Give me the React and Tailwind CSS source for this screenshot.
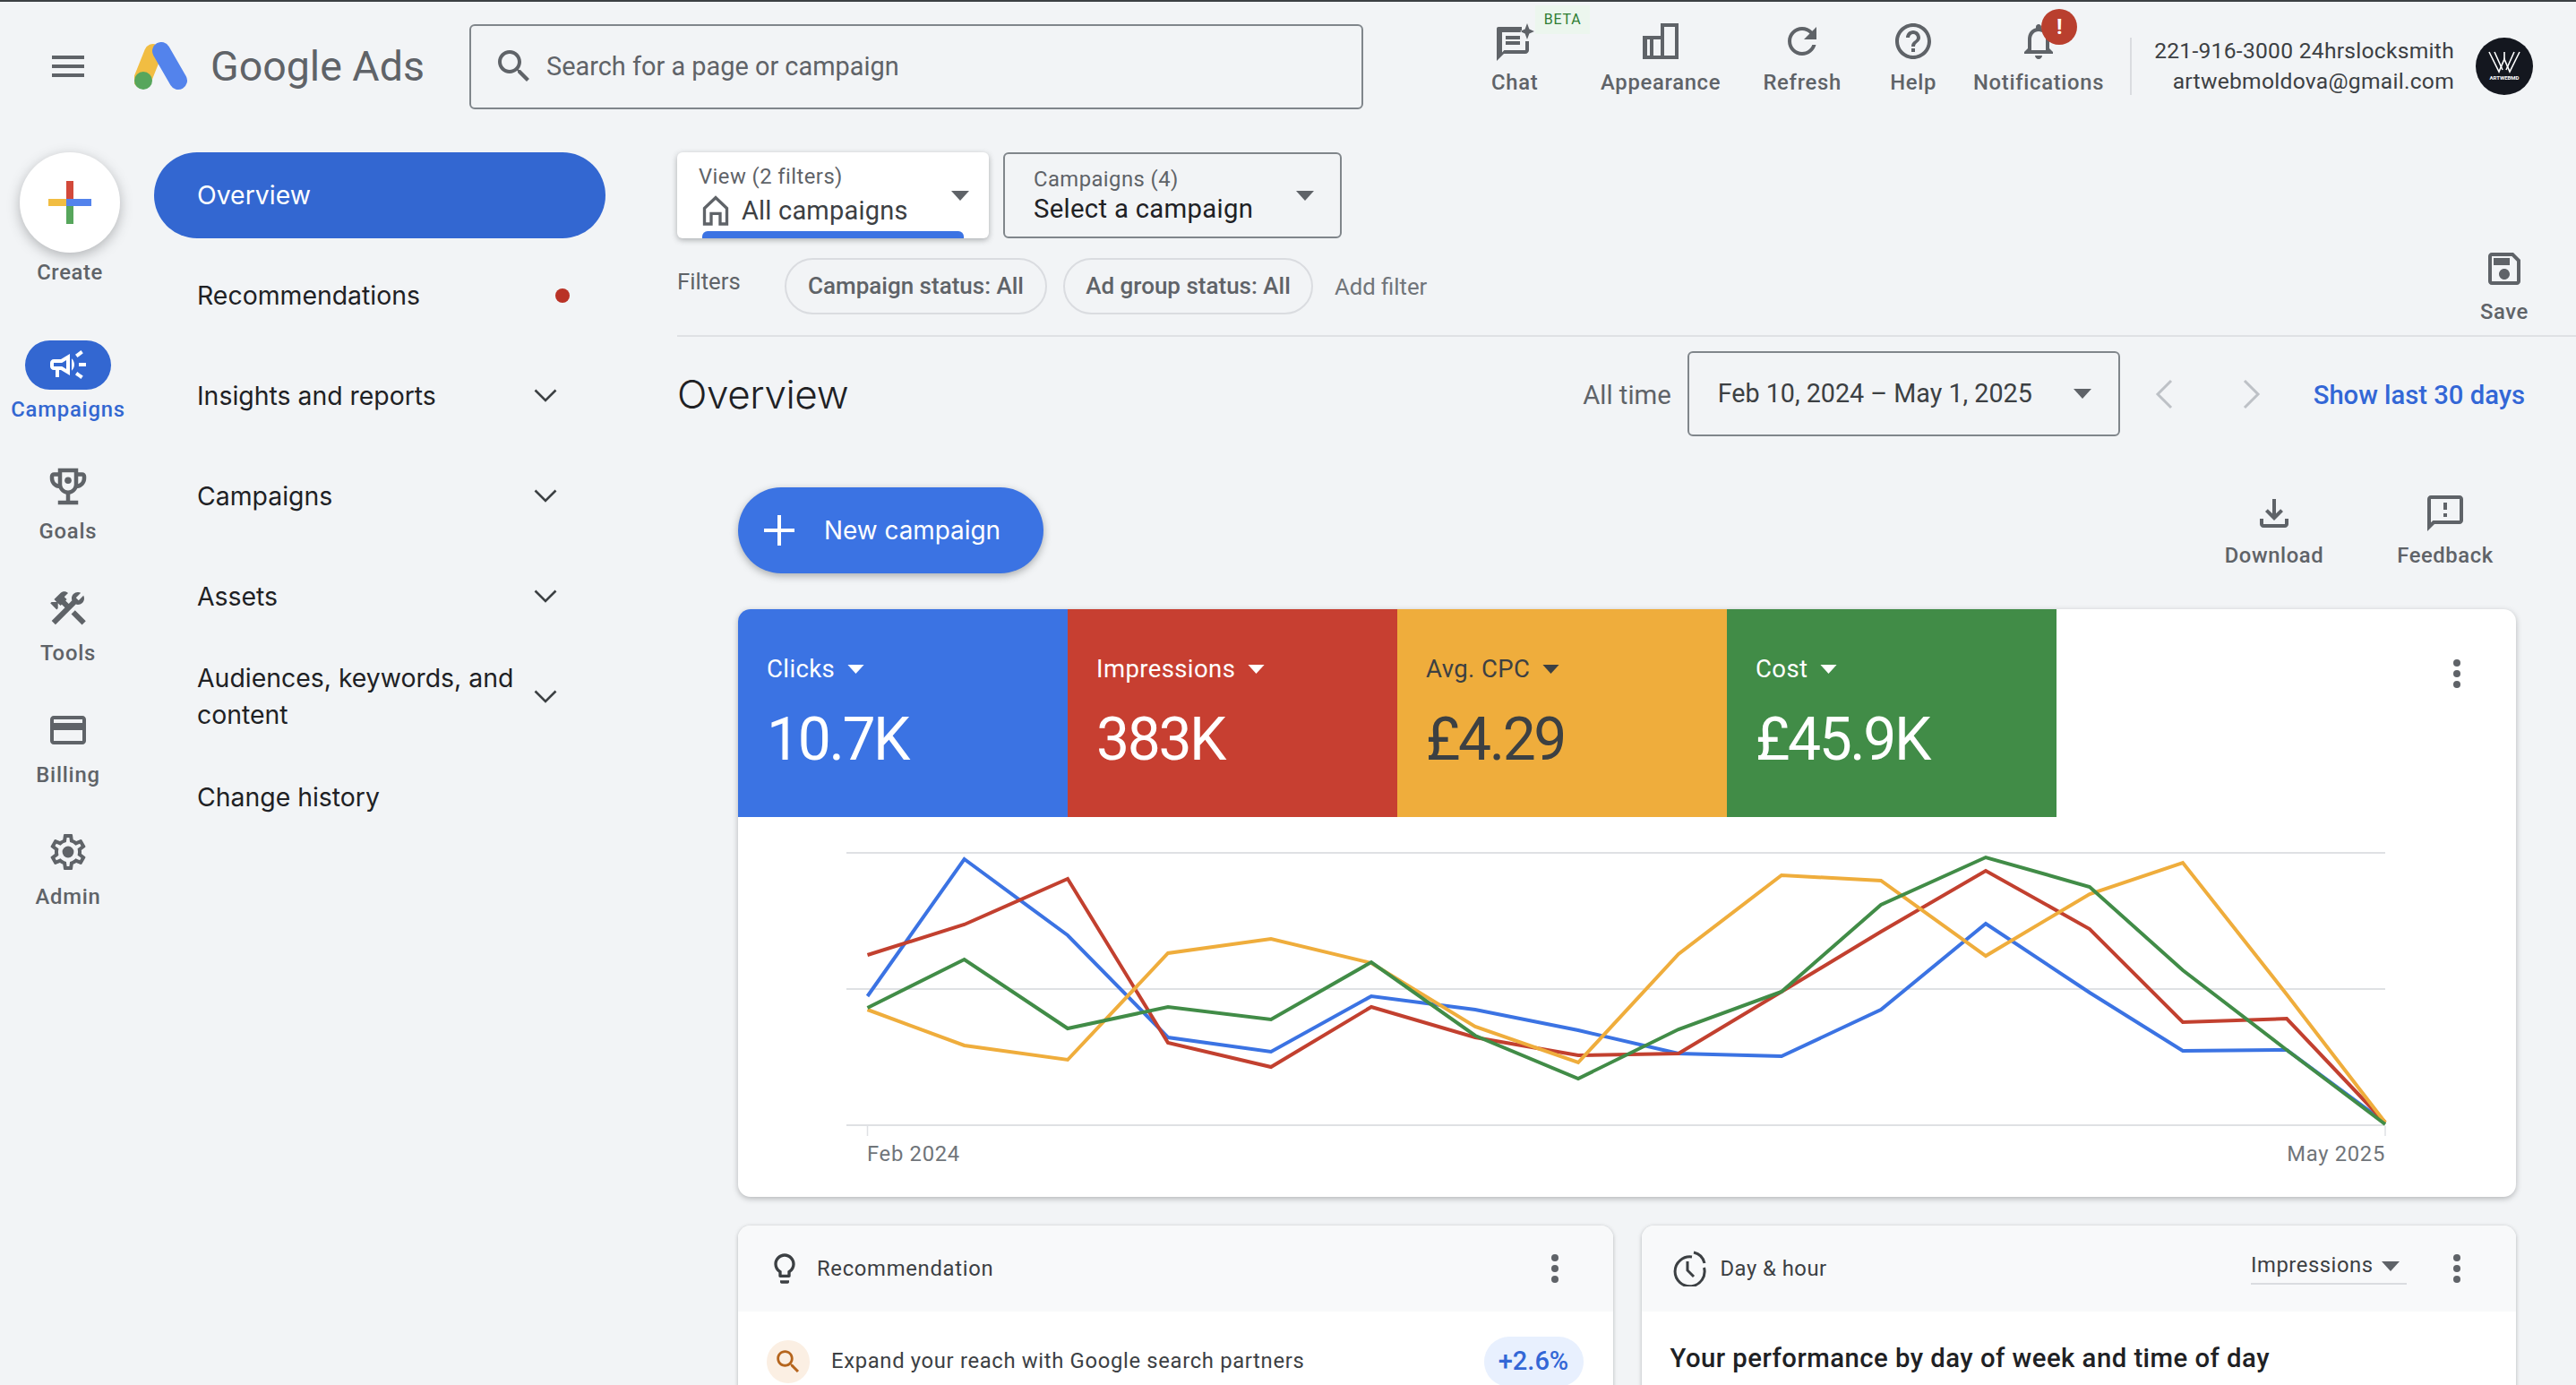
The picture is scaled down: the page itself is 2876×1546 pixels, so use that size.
import React from "react";

const G = "#5f6368";
const Ic = ({ d, size = 48, color = G, children, cls = "" }) => (
  <svg viewBox="0 0 24 24" width={size} height={size} fill={color} fillRule="evenodd" className={"shrink-0 " + cls}>
    {d && <path d={d} />}
    {children}
  </svg>
);
const Caret = ({ w = 20, h = 11, color = G }) => (
  <svg viewBox="0 0 20 11" width={w} height={h} fill={color} className="shrink-0"><path d="M0 0h20L10 11z" /></svg>
);
const Dots = ({ color = G }) => (
  <svg viewBox="0 0 8 32" width="8" height="32" fill={color} className="shrink-0">
    <circle cx="4" cy="4" r="4" /><circle cx="4" cy="16" r="4" /><circle cx="4" cy="28" r="4" />
  </svg>
);
const Chevron = () => (
  <svg viewBox="0 0 26 16" width="26" height="16" fill="none" stroke="#3c4043" strokeWidth="2.6" className="shrink-0"><path d="M1.5 1.5 13 13 24.5 1.5" /></svg>
);

const P = {
  menu: "M3 18h18v-2H3v2zm0-5h18v-2H3v2zm0-7v2h18V6H3z",
  search: "M15.5 14h-.79l-.28-.27C15.41 12.59 16 11.11 16 9.5 16 5.91 13.09 3 9.5 3S3 5.91 3 9.5 5.91 16 9.5 16c1.61 0 3.09-.59 4.23-1.57l.27.28v.79l5 4.99L20.49 19l-4.99-5zm-6 0C7.01 14 5 11.99 5 9.5S7.01 5 9.5 5 14 7.01 14 9.5 11.99 14 9.5 14z",
  refresh: "M17.65 6.35C16.2 4.9 14.21 4 12 4c-4.42 0-7.99 3.58-7.99 8s3.57 8 7.99 8c3.73 0 6.84-2.55 7.73-6h-2.08c-.82 2.33-3.04 4-5.65 4-3.31 0-6-2.69-6-6s2.69-6 6-6c1.66 0 3.14.69 4.22 1.78L13 11h7V4l-2.35 2.35z",
  help: "M11 18h2v-2h-2v2zm1-16C6.48 2 2 6.48 2 12s4.48 10 10 10 10-4.48 10-10S17.52 2 12 2zm0 18c-4.41 0-8-3.59-8-8s3.59-8 8-8 8 3.59 8 8-3.59 8-8 8zm0-14c-2.21 0-4 1.79-4 4h2c0-1.1.9-2 2-2s2 .9 2 2c0 2-3 1.75-3 5h2c0-2.25 3-2.5 3-5 0-2.21-1.79-4-4-4z",
  bell: "M12 22c1.1 0 2-.9 2-2h-4c0 1.1.9 2 2 2zm6-6v-5c0-3.07-1.63-5.64-4.5-6.32V4c0-.83-.67-1.5-1.5-1.5s-1.5.67-1.5 1.5v.68C7.64 5.36 6 7.92 6 11v5l-2 2v1h16v-1l-2-2zm-2 1H8v-6c0-2.48 1.51-4.5 4-4.5s4 2.02 4 4.5v6z",
  appearance: "M12 2h10v20H2V9h10V2zm2 2v16h6V4h-6zM4.5 11v9H6v-9H4.5zM8 11v9h4v-9H8z",
  chat: "M3 4h13v3H5v11.2L6.2 17H18v-5h2v5c0 1.1-.9 2-2 2H6l-4 4V5c0-.6.4-1 1-1zm4 5h8v2H7V9zm0 3h8v2H7v-2zM19 2l1.2 3.3L23 6.5l-2.8 1.2L19 11l-1.2-3.3L15 6.5l2.8-1.2L19 2z",
  trophy: "M19 5h-2V3H7v2H5c-1.1 0-2 .9-2 2v1c0 2.55 1.92 4.63 4.39 4.94.63 1.5 1.98 2.63 3.61 2.96V19H7v2h10v-2h-4v-3.1c1.63-.33 2.98-1.46 3.61-2.96C19.08 12.63 21 10.55 21 8V7c0-1.1-.9-2-2-2zM5 8V7h2v3.82C5.84 10.4 5 9.3 5 8zm14 0c0 1.3-.84 2.4-2 2.82V7h2v1zM9 5h6v6c0 1.65-1.35 3-3 3s-3-1.35-3-3V5z",
  tools: "M13.78 15.3l6 6 2.11-2.16-6-6zM17.5 10c1.93 0 3.5-1.57 3.5-3.5 0-.58-.16-1.12-.41-1.6l-2.7 2.7-1.49-1.49 2.7-2.7c-.48-.25-1.02-.41-1.6-.41C15.57 3 14 4.57 14 6.5c0 .41.08.8.21 1.16l-1.85 1.85-1.78-1.78.71-.71-1.41-1.41L12 3.49c-1.17-1.17-3.07-1.17-4.24 0L4.22 7.03l1.41 1.41H2.81l-.71.71 3.54 3.54.71-.71V9.15l1.41 1.41.71-.71 1.78 1.78-7.41 7.41 2.12 2.12L16.34 9.79c.36.13.75.21 1.16.21z",
  card: "M20 4H4c-1.11 0-1.99.89-1.99 2L2 18c0 1.11.89 2 2 2h16c1.11 0 2-.89 2-2V6c0-1.11-.89-2-2-2zm0 14H4v-6h16v6zm0-10H4V6h16v2z",
  gear: "M19.43 12.98c.04-.32.07-.64.07-.98 0-.34-.03-.66-.07-.98l2.11-1.65c.19-.15.24-.42.12-.64l-2-3.46c-.09-.16-.26-.25-.44-.25-.06 0-.12.01-.17.03l-2.49 1c-.52-.4-1.08-.73-1.69-.98l-.38-2.65C14.46 2.18 14.25 2 14 2h-4c-.25 0-.46.18-.49.42l-.38 2.65c-.61.25-1.17.59-1.69.98l-2.49-1c-.06-.02-.12-.03-.18-.03-.17 0-.34.09-.43.25l-2 3.46c-.13.22-.07.49.12.64l2.11 1.65c-.04.32-.07.65-.07.98 0 .33.03.66.07.98l-2.11 1.65c-.19.15-.24.42-.12.64l2 3.46c.09.16.26.25.44.25.06 0 .12-.01.17-.03l2.49-1c.52.4 1.08.73 1.69.98l.38 2.65c.03.24.24.42.49.42h4c.25 0 .46-.18.49-.42l.38-2.65c.61-.25 1.17-.59 1.69-.98l2.49 1c.06.02.12.03.18.03.17 0 .34-.09.43-.25l2-3.46c.12-.22.07-.49-.12-.64l-2.11-1.65zm-1.98-1.71c.04.31.05.52.05.73 0 .21-.02.43-.05.73l-.14 1.13.89.7 1.08.84-.7 1.21-1.27-.51-1.04-.42-.9.68c-.43.32-.84.56-1.25.73l-1.06.43-.16 1.13-.2 1.35h-1.4l-.19-1.35-.16-1.13-1.06-.43c-.43-.18-.83-.41-1.23-.71l-.91-.7-1.06.43-1.27.51-.7-1.21 1.08-.84.89-.7-.14-1.13c-.03-.31-.05-.54-.05-.74s.02-.43.05-.73l.14-1.13-.89-.7-1.08-.84.7-1.21 1.27.51 1.04.42.9-.68c.43-.32.84-.56 1.25-.73l1.06-.43.16-1.13.2-1.35h1.39l.19 1.35.16 1.13 1.06.43c.43.18.83.41 1.23.71l.91.7 1.06-.43 1.27-.51.7 1.21-1.07.85-.89.7.14 1.13z",
  campaign: "M18 11v2h4v-2h-4zm-2 6.61c.96.71 2.21 1.65 3.2 2.39.4-.53.8-1.07 1.2-1.6-.99-.74-2.24-1.68-3.2-2.4-.4.54-.8 1.08-1.2 1.61zM20.4 5.6c-.4-.53-.8-1.07-1.2-1.6-.99.74-2.24 1.68-3.2 2.4.4.53.8 1.07 1.2 1.6.96-.72 2.21-1.65 3.2-2.4zM4 9c-1.1 0-2 .9-2 2v2c0 1.1.9 2 2 2h1v4h2v-4h1l5 3V6L8 9H4zm5.03 1.71L11 9.53v4.94l-1.97-1.18-.48-.29H4v-2h4.55l.48-.29zM15.5 12c0-1.33-.58-2.53-1.5-3.35v6.69c.92-.81 1.5-2.01 1.5-3.34z",
  save: "M17 3H5c-1.11 0-2 .9-2 2v14c0 1.1.89 2 2 2h14c1.1 0 2-.9 2-2V7l-4-4zm2 16H5V5h11.17L19 7.83V19zm-7-7c-1.66 0-3 1.34-3 3s1.34 3 3 3 3-1.34 3-3-1.34-3-3-3zM6 6h9v4H6z",
  download: "M18 15v3H6v-3H4v3c0 1.1.9 2 2 2h12c1.1 0 2-.9 2-2v-3h-2zm-1-4l-1.41-1.41L13 12.17V4h-2v8.17L8.41 9.59 7 11l5 5 5-5z",
  feedback: "M20 2H4c-1.1 0-1.99.9-1.99 2L2 22l4-4h14c1.1 0 2-.9 2-2V4c0-1.1-.9-2-2-2zm0 14H5.17L4 17.17V4h16v12zm-9-4h2v2h-2zm0-6h2v4h-2z",
  bulb: "M9 21c0 .55.45 1 1 1h4c.55 0 1-.45 1-1v-1H9v1zm3-19C8.14 2 5 5.14 5 9c0 2.38 1.19 4.47 3 5.74V17c0 .55.45 1 1 1h6c.55 0 1-.45 1-1v-2.26c1.81-1.27 3-3.36 3-5.74 0-3.86-3.14-7-7-7zm2.85 11.1l-.85.6V16h-4v-2.3l-.85-.6C7.8 12.16 7 10.63 7 9c0-2.76 2.24-5 5-5s5 2.24 5 5c0 1.63-.8 3.16-2.15 4.1z",
  home: "M12 2 3.5 10v12H10v-7h4v7h6.5V10L12 2zm6.5 18H16v-7H8v7H5.5v-9.1L12 4.8l6.5 6.1V20z",
};

const TopAction = ({ icon, label, w, ml, children }) => (
  <div className={`relative flex flex-col items-center pt-[20px] ${w} ${ml}`}>
    <Ic d={icon} />
    <span className="mt-[6px] text-[23.8px] leading-[32px] font-medium tracking-[0.7px] text-[#5f6368] whitespace-nowrap">{label}</span>
    {children}
  </div>
);

const RailItem = ({ icon, label, active, extra, size = 48 }) => (
  <div className="flex h-[100px] flex-col items-center">
    <div className={`flex h-[56px] w-[96px] items-center justify-center rounded-full ${active ? "bg-[#3367d1]" : ""}`}>
      <Ic d={icon} size={size} color={active ? "#ffffff" : G}>{extra}</Ic>
    </div>
    <span className={`flex h-[46px] items-center text-[23.8px] font-medium tracking-[0.8px] whitespace-nowrap ${active ? "text-[#3367d1]" : "text-[#5f6368]"}`}>{label}</span>
  </div>
);

const NavItem = ({ label, chevron, dot, active }) => (
  <div className={`flex h-[96px] items-center justify-between rounded-full pl-[48px] ${dot ? "pr-[40px]" : "pr-[54px]"} ${active ? "bg-[#3367d1] text-white" : "text-[#202124]"}`}>
    <span className="w-[360px] pb-[2px] text-[28.4px] leading-[41px] [font-family:Inter,sans-serif]">{label}</span>
    {chevron && <Chevron />}
    {dot && <span className="h-[16px] w-[16px] rounded-full bg-[#b93226]" />}
  </div>
);

const Tile = ({ label, value, bg, fg, color }) => (
  <div className={`h-[232px] w-[368px] pl-[32px] pt-[52px] ${bg} ${fg}`}>
    <div className="flex h-[30px] items-center gap-[14px] text-[27.5px] leading-[30px] tracking-[0.4px]">
      <span>{label}</span>
      <Caret w={19} h={10} color={color} />
    </div>
    <div className="mt-[24px] text-[66px] leading-[80px] tracking-[-2.4px]">{value}</div>
  </div>
);

const xs = [968.5, 1076.6, 1192, 1304, 1419, 1531, 1647, 1762, 1874, 1989, 2100, 2217, 2333, 2437, 2553, 2663];
const series = [
  ["#3b73e3", [1112, 959, 1044, 1158, 1174, 1112, 1127, 1150, 1176, 1179, 1127, 1031, 1108, 1173, 1172, 1253]],
  ["#c2402f", [1066, 1032, 981, 1164, 1191, 1124, 1158, 1178, 1176, 1107, 1040, 972, 1037, 1141, 1137, 1253]],
  ["#efad3c", [1127, 1167, 1183, 1064, 1048, 1075, 1146, 1186, 1065, 977, 983, 1067, 998, 963, 1110, 1253]],
  ["#418c47", [1125, 1071, 1148, 1124, 1138, 1074, 1156, 1204, 1149, 1107, 1010, 957, 990, 1083, 1172, 1255]],
];

const Chart = () => (
  <svg viewBox="824 912 1985 424" width="1985" height="424" className="block">
    {[952, 1104, 1256].map((y) => (
      <line key={y} x1="945" x2="2663" y1={y} y2={y} stroke="#dfe1e4" strokeWidth="2" />
    ))}
    <line x1="968.5" x2="968.5" y1="1257" y2="1268" stroke="#dfe1e4" strokeWidth="1.5" />
    <line x1="2663" x2="2663" y1="1257" y2="1268" stroke="#dfe1e4" strokeWidth="1.5" />
    {series.map(([c, ys]) => (
      <polyline key={c} fill="none" stroke={c} strokeWidth="4" strokeLinejoin="miter" points={ys.map((y, i) => `${xs[i]},${y}`).join(" ")} />
    ))}
    <text x="968" y="1296" fontSize="23.8" letterSpacing="0.7" fill="#70757a" fontFamily="Roboto, sans-serif">Feb 2024</text>
    <text x="2663" y="1296" fontSize="23.8" letterSpacing="0.7" fill="#70757a" textAnchor="end" fontFamily="Roboto, sans-serif">May 2025</text>
  </svg>
);

export default function App() {
  return (
    <div className="flex h-[1546px] w-[2876px] flex-col overflow-hidden border-t-2 border-[#3c4043] bg-[#f2f4f6] [font-family:Roboto,sans-serif]">
      {/* header */}
      <header className="flex h-[144px] shrink-0 items-center">
        <div className="ml-[52px]"><Ic d={P.menu} /></div>
        <svg viewBox="150 46 60 54" width="60" height="54" className="ml-[50px] shrink-0">
          <line x1="171" y1="58" x2="159" y2="88" stroke="#f1bd42" strokeWidth="20" strokeLinecap="round" />
          <line x1="180" y1="56" x2="199" y2="89" stroke="#5383ec" strokeWidth="20" strokeLinecap="round" />
          <circle cx="160" cy="89" r="10" fill="#57a65c" />
        </svg>
        <span className="ml-[25px] w-[239px] text-[46.5px] leading-none text-[#5f6368] whitespace-nowrap">Google Ads</span>
        <div className="ml-[50px] flex h-[95px] w-[998px] shrink-0 items-center rounded-[6px] border-2 border-[#80868b] pl-[24px]">
          <Ic d={P.search} />
          <span className="ml-[12px] pt-[2px] text-[28.9px] text-[#5f6368]">Search for a page or campaign</span>
        </div>
        <div className="flex-1" />
        <div className="flex h-full shrink-0 items-start pr-[48px]">
          <TopAction icon={P.chat} label="Chat" w="w-[80px]" ml="">
            <span className="absolute left-[63px] top-[4px] flex h-[32px] w-[61px] items-center justify-center bg-[#ecf6ee] text-[16px] tracking-[0.8px] text-[#2e7d32]">BETA</span>
          </TopAction>
          <TopAction icon={P.appearance} label="Appearance" w="w-[140px]" ml="ml-[53px]" />
          <TopAction icon={P.refresh} label="Refresh" w="w-[100px]" ml="ml-[38px]" />
          <TopAction icon={P.help} label="Help" w="w-[60px]" ml="ml-[44px]" />
          <TopAction icon={P.bell} label="Notifications" w="w-[150px]" ml="ml-[35px]">
            <span className="absolute left-[78px] top-[8px] flex h-[40px] w-[40px] items-center justify-center rounded-full bg-[#b93f2e] text-[24px] font-bold text-white">!</span>
          </TopAction>
          <div className="ml-[27px] mt-[40px] h-[64px] w-[2px] bg-[#dadce0]" />
          <div className="ml-[25px] mt-[38px] flex flex-col items-end text-[24.6px] leading-[34px] tracking-[0.28px] text-[#3c4043] whitespace-nowrap">
            <span>221-916-3000 24hrslocksmith</span>
            <span>artwebmoldova@gmail.com</span>
          </div>
          <div className="ml-[24px] mt-[40px] flex h-[64px] w-[64px] shrink-0 items-center justify-center rounded-full bg-[#14171f]">
            <svg viewBox="0 0 64 64" width="64" height="64" fill="none" stroke="#ffffff" strokeWidth="1.6">
              <path d="M15 16l11 22 6-14 6 14 11-22" />
              <path d="M21 16l9 20M43 16l-9 20M32 16v8" />
              <text x="32" y="47" fill="#ffffff" stroke="none" fontSize="6" textAnchor="middle" fontFamily="Roboto, sans-serif" fontWeight="700">ARTWEBMD</text>
            </svg>
          </div>
        </div>
      </header>

      <div className="flex min-h-0 flex-1">
        {/* rail */}
        <aside className="flex w-[152px] shrink-0 flex-col pt-[24px]">
          <div className="flex h-[210px] flex-col items-center pl-[4px]">
            <div className="flex h-[112px] w-[112px] items-center justify-center rounded-full bg-white shadow-[0_4px_14px_rgba(60,64,67,0.35)]">
              <svg viewBox="0 0 48 48" width="48" height="48">
                <rect x="20" y="0" width="8" height="24" fill="#d2493a" />
                <rect x="20" y="24" width="8" height="24" fill="#57a65c" />
                <rect x="0" y="20" width="20" height="8" fill="#f1bd42" />
                <rect x="20" y="20" width="28" height="8" fill="#5383ec" />
              </svg>
            </div>
            <span className="mt-[6px] text-[23.8px] leading-[32px] font-medium tracking-[0.6px] text-[#5f6368]">Create</span>
          </div>
          <div className="flex flex-col gap-[36px]">
            <RailItem icon={P.campaign} label="Campaigns" active />
            <RailItem icon={P.trophy} label="Goals" size={54} extra={<circle cx="12" cy="9" r="1.7" />} />
            <RailItem icon={P.tools} label="Tools" />
            <RailItem icon={P.card} label="Billing" />
            <RailItem icon={P.gear} label="Admin" extra={<circle cx="12" cy="12" r="3.2" />} />
          </div>
        </aside>

        {/* nav */}
        <nav className="flex w-[604px] shrink-0 flex-col gap-[16px] pl-[20px] pr-[80px] pt-[24px]">
          <NavItem label="Overview" active />
          <NavItem label="Recommendations" dot />
          <NavItem label="Insights and reports" chevron />
          <NavItem label="Campaigns" chevron />
          <NavItem label="Assets" chevron />
          <NavItem label="Audiences, keywords, and content" chevron />
          <NavItem label="Change history" />
        </nav>

        {/* content */}
        <main className="min-w-0 flex-1 pt-[24px]">
          <div className="flex gap-[16px]">
            <div className="relative h-[96px] w-[348px] rounded-[6px] bg-white pl-[24px] pt-[12px] shadow-[0_2px_6px_rgba(60,64,67,0.4)]">
              <div className="text-[23.8px] leading-[30px] tracking-[0.45px] text-[#5f6368]">View (2 filters)</div>
              <div className="mt-[3px] -ml-[1px] flex items-center gap-[9px]">
                <Ic d={P.home} size={40} />
                <span className="text-[29px] leading-[36px] tracking-[0.2px] text-[#3c4043]">All campaigns</span>
              </div>
              <div className="absolute bottom-0 left-[28px] h-[8px] w-[292px] rounded-t-[6px] bg-[#3b73e3]" />
              <div className="absolute right-[22px] top-[43px]"><Caret /></div>
            </div>
            <div className="relative h-[96px] w-[378px] rounded-[6px] border-2 border-[#80868b] pl-[32px] pt-[13px]">
              <div className="text-[23.8px] leading-[30px] tracking-[0.45px] text-[#5f6368]">Campaigns (4)</div>
              <div className="text-[29.3px] leading-[36px] tracking-[0.3px] text-[#202124]">Select a campaign</div>
              <div className="absolute right-[29px] top-[41px]"><Caret /></div>
            </div>
          </div>

          <div className="flex h-[110px] items-start border-b-2 border-[#dfe1e4]">
            <span className="mt-[32px] w-[120px] text-[25.7px] leading-[32px] text-[#5f6368]">Filters</span>
            <span className="mt-[22px] flex h-[63px] w-[293px] items-center justify-center rounded-full border-2 border-[#dadce0] text-[26px] font-medium text-[#5f6368] whitespace-nowrap">Campaign status: All</span>
            <span className="ml-[18px] mt-[22px] flex h-[63px] w-[279px] items-center justify-center rounded-full border-2 border-[#dadce0] text-[26px] font-medium text-[#5f6368] whitespace-nowrap">Ad group status: All</span>
            <span className="ml-[24px] mt-[38px] text-[25.7px] leading-[32px] text-[#70757a] whitespace-nowrap">Add filter</span>
            <div className="ml-auto mr-[50px] mt-[10px] flex w-[60px] flex-col items-center">
              <Ic d={P.save} />
              <span className="mt-[9px] text-[23.8px] leading-[30px] font-medium tracking-[0.6px] text-[#5f6368]">Save</span>
            </div>
          </div>

          <div className="flex h-[111px] items-start pr-[57px] pt-[16px]">
            <span className="mt-[16px] text-[44px] leading-[64px] [font-family:Inter,sans-serif] tracking-[-0.4px] text-[#202124] font-light">Overview</span>
            <span className="ml-auto mt-[33px] text-[29.3px] leading-[32px] text-[#5f6368]">All time</span>
            <div className="ml-[18px] flex h-[95px] w-[483px] items-center justify-between rounded-[6px] border-2 border-[#80868b] pl-[32px] pr-[30px]">
              <span className="text-[28.7px] text-[#3c4043] whitespace-nowrap">Feb 10, 2024 – May 1, 2025</span>
              <Caret />
            </div>
            <svg viewBox="0 0 20 34" width="20" height="34" fill="none" stroke="#bdc1c6" strokeWidth="3" className="ml-[39px] mt-[31px] shrink-0"><path d="M18 2 3 17l15 15" /></svg>
            <svg viewBox="0 0 20 34" width="20" height="34" fill="none" stroke="#bdc1c6" strokeWidth="3" className="ml-[78px] mt-[31px] shrink-0"><path d="M2 2l15 15L2 32" /></svg>
            <span className="ml-[59px] mt-[33px] text-[29.2px] leading-[32px] font-medium text-[#3367d6] whitespace-nowrap">Show last 30 days</span>
          </div>

          <div className="pl-[68px] pr-[67px]">
            <div className="mt-[57px] flex h-[96px] items-start">
              <div className="flex h-[96px] w-[341px] items-center rounded-full bg-[#3b73e3] pl-[24px] text-white shadow-[0_3px_8px_rgba(60,64,67,0.4)]">
                <svg viewBox="0 0 44 44" width="44" height="44" stroke="#ffffff" strokeWidth="4"><path d="M22 5v34M5 22h34" /></svg>
                <span className="ml-[28px] pt-[2px] text-[27.9px] [font-family:Inter,sans-serif] whitespace-nowrap">New campaign</span>
              </div>
              <div className="ml-auto flex w-[120px] flex-col items-center pt-[5px]">
                <Ic d={P.download} />
                <span className="mt-[8px] text-[23.8px] leading-[30px] font-medium tracking-[0.6px] text-[#5f6368]">Download</span>
              </div>
              <div className="ml-[71px] mr-[19px] flex w-[120px] flex-col items-center pt-[5px]">
                <Ic d={P.feedback} />
                <span className="mt-[8px] text-[23.8px] leading-[30px] font-medium tracking-[0.6px] text-[#5f6368]">Feedback</span>
              </div>
            </div>

            <section className="mt-[40px] h-[656px] overflow-hidden rounded-[14px] bg-white shadow-[0_2px_6px_rgba(60,64,67,0.35)]">
              <div className="flex h-[232px]">
                <Tile label="Clicks" value="10.7K" bg="bg-[#3b73e3]" fg="text-white" color="#ffffff" />
                <Tile label="Impressions" value="383K" bg="bg-[#c73f31]" fg="text-white" color="#ffffff" />
                <Tile label="Avg. CPC" value="£4.29" bg="bg-[#efad3c]" fg="text-[#3c4043]" color="#3c4043" />
                <Tile label="Cost" value="£45.9K" bg="bg-[#418c47]" fg="text-white" color="#ffffff" />
                <div className="ml-auto mr-[62px] mt-[56px]"><Dots /></div>
              </div>
              <Chart />
            </section>

            <div className="mt-[32px] grid grid-cols-2 gap-[32px]">
              <section className="h-[300px] overflow-hidden rounded-[14px] bg-white shadow-[0_1px_4px_rgba(60,64,67,0.35)]">
                <div className="flex h-[96px] items-center bg-[#f8f9fa] pl-[32px] pr-[61px]">
                  <Ic d={P.bulb} size={40} color="#3c4043" />
                  <span className="ml-[16px] pt-[1px] text-[23.8px] tracking-[0.7px] text-[#3c4043]">Recommendation</span>
                  <div className="ml-auto"><Dots /></div>
                </div>
                <div className="mt-[28px] flex h-[56px] items-center pl-[32px] pr-[33px]">
                  <span className="flex h-[48px] w-[48px] items-center justify-center rounded-full bg-[#fbefe3]">
                    <svg viewBox="0 0 24 24" width="34" height="34" fill="#b5651d"><path d={P.search} /></svg>
                  </span>
                  <span className="ml-[24px] text-[23.8px] tracking-[0.67px] text-[#3c4043] whitespace-nowrap">Expand your reach with Google search partners</span>
                  <span className="ml-auto flex h-[56px] w-[111px] items-center justify-center rounded-full bg-[#e8f0fe] text-[29px] font-medium text-[#3367d6]">+2.6%</span>
                </div>
              </section>
              <section className="h-[300px] overflow-hidden rounded-[14px] bg-white shadow-[0_1px_4px_rgba(60,64,67,0.35)]">
                <div className="flex h-[96px] items-center bg-[#f8f9fa] pl-[32px] pr-[62px]">
                  <svg viewBox="0 0 40 40" width="40" height="40" fill="none" stroke="#3c4043" strokeWidth="3" className="shrink-0">
                    <path d="M24 7A16.5 16.5 0 1 0 37.5 19" />
                    <path d="M26 2a16 16 0 0 1 12 12" />
                    <path d="M19 12v10l7 7" />
                  </svg>
                  <span className="ml-[16px] pt-[1px] text-[23.8px] tracking-[0.5px] text-[#3c4043]">Day &amp; hour</span>
                  <div className="ml-auto flex h-[36px] w-[174px] items-center gap-[9px] self-center border-b-2 border-[#dadce0] pb-[4px]">
                    <span className="text-[23.8px] tracking-[0.55px] text-[#3c4043]">Impressions</span>
                    <Caret w={20} h={11} />
                  </div>
                  <div className="ml-[52px]"><Dots /></div>
                </div>
                <div className="pl-[32px] pt-[36px] text-[29.3px] leading-[32px] font-medium tracking-[0.47px] text-[#202124]">Your performance by day of week and time of day</div>
              </section>
            </div>
          </div>
        </main>
      </div>
    </div>
  );
}
